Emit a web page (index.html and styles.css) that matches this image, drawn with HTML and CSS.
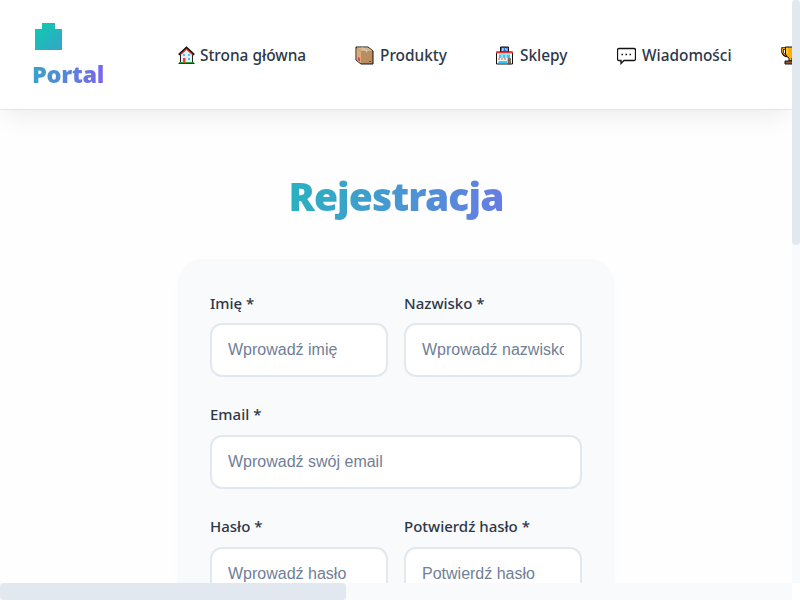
FILE: index.html
```html
<!DOCTYPE html>
<html lang="pl">
<head>
<meta charset="utf-8">
<title>Portal - Rejestracja</title>
<link rel="stylesheet" href="styles.css">
</head>
<body>
<div class="viewport">
  <div class="page">
    <header class="header">
      <a class="brand">
        <svg class="logo" width="27" height="27" viewBox="0 0 27 27"><defs><linearGradient id="g" x1="0" y1="0" x2="1" y2="1"><stop stop-color="#0dcbb0"/><stop offset="1" stop-color="#35a4c8"/></linearGradient></defs><path fill="url(#g)" d="M7 0h13v6h7v21H0V6h7z"/></svg>
        <span class="brand-name">Portal</span>
      </a>
      <nav class="nav">
        <a class="link home">
          <svg class="icon" width="18" height="19" viewBox="0 0 18 19"><path d="M2.500 8.500 8.500 3l6 5.500V17h-12z" fill="#e9eff4" stroke="#222"/><path d="M.800 8.700 8.500 1.700l7.700 7" fill="none" stroke="#111" stroke-width="2"/><path d="M2.500 8.500 8.500 3l6 5.500" fill="none" stroke="#d8432f" stroke-width="1.100"/><path d="M5 8h2v2H5zm5 0h2v2h-2zm0 4h2v2h-2z" fill="#43cbf5"/><path d="M5 12h2.500v5H5z" fill="#e8432b"/><path d="M.500 17.500h16" stroke="#333"/><path d="M1 16.500h4m3 0h8" stroke="#22a63c"/></svg>
          <span>Strona główna</span>
        </a>
        <a class="link products">
          <svg class="icon" width="19" height="19" viewBox="0 0 19 19"><path d="M1 1h12l5 4v13H6l-5-4z" fill="#b98c61" stroke="#111" stroke-linejoin="round"/><path d="M1.500 1.500h11.500L17.500 5H6z" fill="#d9b384"/><path d="M1.500 2 6 5.500v12L1.500 14z" fill="#d5ac7e"/><path d="m6 1.500 5 3.500v1.500l1.500-1V5L8 1.500z" fill="#c5cdd0"/><path d="m3 11 2 1.500v3L3 14z" fill="#ee3340"/><path d="M14 15.500h2" stroke="#684b32"/></svg>
          <span>Produkty</span>
        </a>
        <a class="link shops">
          <svg class="icon" width="19" height="19" viewBox="0 0 19 19"><path d="M1.500 6h16v12h-16z" fill="#eef5f7" stroke="#111"/><path d="M5.500 1h8v5h-8z" fill="#2868e8" stroke="#111"/><path d="M7 2.500h1.500v1H7v1h1.500M10.500 2v2H12M12 2v3" fill="none" stroke="#dfeaff" stroke-width=".7"/><path d="M1 6.500h17" stroke="#e33b30" stroke-width="1.700"/><path d="M4 8.500h11v3.500H4zM3 15h9v2H3z" fill="#36c7f5"/><path d="M7 9v3m4-3v3M3 8v9" stroke="#fff"/><path d="M3 13h9" stroke="#ef4b3d" stroke-dasharray="2 1"/><path d="M13 12.500h2.500V18H13z" fill="#9d6845" stroke="#333" stroke-width=".5"/></svg>
          <span>Sklepy</span>
        </a>
        <a class="link messages">
          <svg class="icon" width="19" height="19" viewBox="0 0 19 19"><path d="M2 2.500h15q1.500 0 1.500 1.500v9q0 1.500-1.500 1.500H7l-3 3v-3H2Q.500 14.500.500 13V4q0-1.500 1.500-1.500z" fill="#fff" stroke="#111" stroke-width="1.300"/><path d="M4.500 8.500H6m2.500 0H10m2.500 0H14" stroke="#111" stroke-width="1.500"/></svg>
          <span>Wiadomości</span>
        </a>
        <a class="link awards">
          <svg class="icon" width="19" height="19" viewBox="0 0 19 19"><path d="M5 2.500H1.500V6q1 4 5 4m7.500-7.500h3.500V6q-1 4-5 4" fill="none" stroke="#111" stroke-width="2.500"/><path d="M5 2.500H1.500V6q1 3 4 3.500" fill="none" stroke="#e8a000"/><path d="M4.500 1h10v7q-1 3-3.500 4v3H8v-3q-2.500-1-3.500-4z" fill="#ffae00" stroke="#111"/><path d="M6 2v6" stroke="#ffe078"/><path d="M4 15h11v3H4z" fill="#9b5638" stroke="#111"/></svg>
        </a>
      </nav>
    </header>
    <main class="main">
      <h1 class="title"><span>Rejestracja</span></h1>
      <form class="card">
        <label class="field"><span class="label">Imię *</span><input placeholder="Wprowadź imię"></label>
        <label class="field"><span class="label">Nazwisko *</span><input placeholder="Wprowadź nazwisko"></label>
        <label class="field wide"><span class="label">Email *</span><input placeholder="Wprowadź swój email"></label>
        <label class="field"><span class="label">Hasło *</span><input placeholder="Wprowadź hasło"></label>
        <label class="field"><span class="label">Potwierdź hasło *</span><input placeholder="Potwierdź hasło"></label>
      </form>
    </main>
  </div>
  <div class="track-y"><div class="thumb-y"></div></div>
  <div class="track-x"><div class="thumb-x"></div></div>
</div>
</body>
</html>
```
FILE: styles.css
```css
* { box-sizing: border-box; }
body { margin: 0; overflow: hidden; background: #fff; color: #2d3748; font-family: "Noto Sans", "Open Sans", sans-serif; }
.viewport { display: grid; grid-template-columns: 792px 8px; grid-template-rows: 583px 17px; width: 800px; height: 600px; overflow: hidden; }
.page { overflow: hidden; min-width: 0; background: #fefefe; }
.header { display: flex; height: 110px; background: #fff; border-bottom: 1px solid #e2e4e8; box-shadow: 0 10px 25px -5px rgba(0, 0, 0, .08); }
.brand { flex: none; width: 145px; padding: 23px 0 0 32px; }
.logo { display: block; margin-left: 3px; }
.brand-name { display: inline-block; margin-top: 8px; font-size: 23.5px; line-height: 33px; font-weight: 900; letter-spacing: -.3px; background: linear-gradient(110deg, #32a8c5, #8060f0); -webkit-background-clip: text; background-clip: text; color: transparent; }
.nav { display: flex; align-items: center; padding-left: 32px; height: 110px; }
.link { display: flex; flex: none; align-items: center; font-size: 15.4px; line-height: 24px; font-weight: 500; white-space: nowrap; }
.link span { padding-top: 2px; }
.icon { flex: none; margin-right: 6px; }
.home { width: 178px; }
.home .icon { margin-left: 1px; margin-right: 4px; }
.products { width: 140px; }
.shops { width: 122px; }
.messages { width: 164px; }
.main { padding-top: 58px; }
.title { margin: 0; height: 91px; font-size: 39px; line-height: 56px; font-weight: 900; letter-spacing: -.9px; text-align: center; }
.title span { display: inline-block; background: linear-gradient(100deg, #27b3bf, #687be4); -webkit-background-clip: text; background-clip: text; color: transparent; }
.card { display: grid; grid-template-columns: 1fr 1fr; column-gap: 16px; row-gap: 24px; width: 436px; height: 700px; align-content: start; margin: 0 auto; padding: 33px 32px; border-radius: 24px; background: #f8fafc; box-shadow: 0 4px 6px -1px rgba(0, 0, 0, .03); }
.field { display: block; min-width: 0; height: 88px; }
.wide { grid-column: 1 / 3; }
.label { display: block; height: 31px; font-size: 15px; line-height: 23px; font-weight: 500; }
.field:nth-child(n+3) .label { line-height: 21px; }
input { display: block; width: 100%; height: 54px; padding: 0 16px; border: 2px solid #e2e8f0; border-radius: 12px; background: #fff; font: 16px "Liberation Sans", sans-serif; }
input::placeholder { color: #718096; opacity: 1; }
.track-y { grid-column: 2; grid-row: 1; background: #f8fafc; }
.thumb-y { height: 245px; border-radius: 4px; background: #e2e8f0; }
.track-x { grid-column: 1; grid-row: 2; background: #f8fafc; }
.thumb-x { width: 346px; height: 17px; border-radius: 4px; background: #e2e8f0; }
```
